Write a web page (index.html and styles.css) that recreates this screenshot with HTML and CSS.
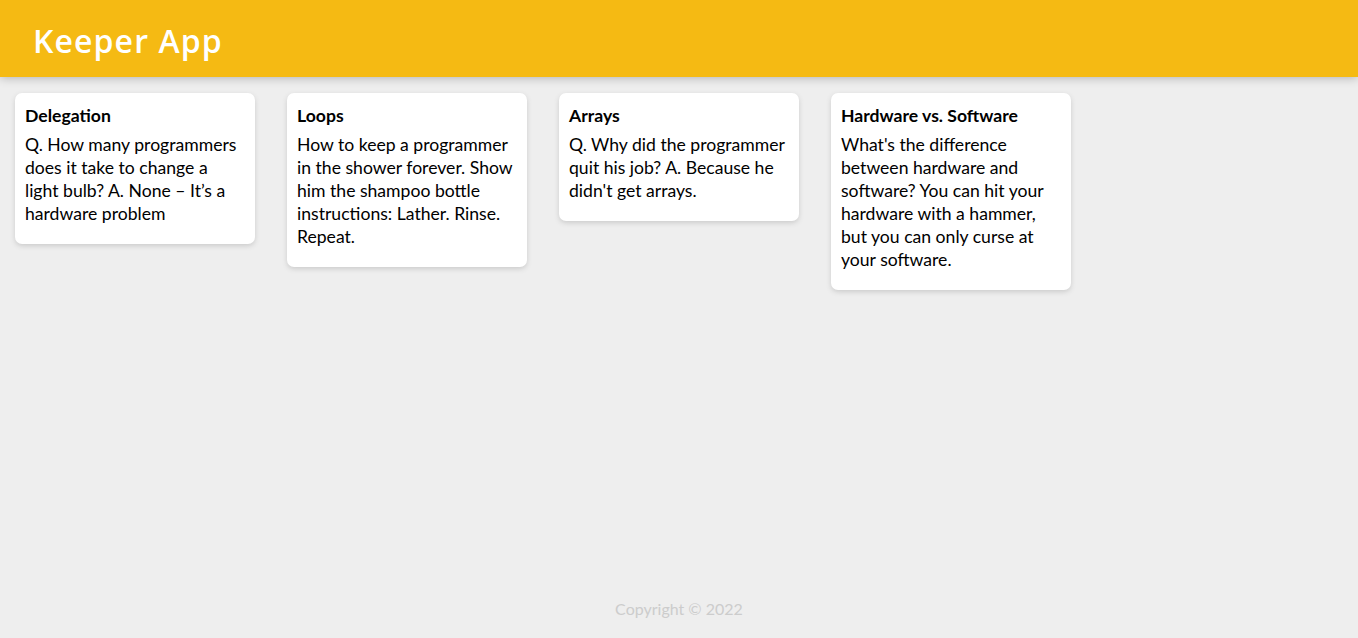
FILE: index.html
```html
<!DOCTYPE html>
<html lang="en">
<head>
<meta charset="utf-8">
<title>Keeper App</title>
<link rel="stylesheet" href="styles.css">
</head>
<body>
<div class="page">
  <header class="header">
    <h1 class="brand">Keeper App</h1>
  </header>
  <main class="notes">
    <div class="note">
      <h1 class="note-title">Delegation</h1>
      <p class="note-body">Q. How many programmers does it take to change a light bulb? A. None – It’s a hardware problem</p>
    </div>
    <div class="note">
      <h1 class="note-title">Loops</h1>
      <p class="note-body">How to keep a programmer in the shower forever. Show him the shampoo bottle instructions: Lather. Rinse. Repeat.</p>
    </div>
    <div class="note">
      <h1 class="note-title">Arrays</h1>
      <p class="note-body">Q. Why did the programmer quit his job? A. Because he didn't get arrays.</p>
    </div>
    <div class="note">
      <h1 class="note-title">Hardware vs. Software</h1>
      <p class="note-body">What's the difference between hardware and software? You can hit your hardware with a hammer, but you can only curse at your software.</p>
    </div>
  </main>
  <footer class="footer">
    <p class="copyright">Copyright © 2022</p>
  </footer>
</div>
</body>
</html>
```
FILE: styles.css
```css
html, body {
  margin: 0;
  padding: 0;
}
body {
  background: #eeeeee;
  font-family: "Lato", "Open Sans", sans-serif;
}
.page {
  min-height: 100vh;
  display: flex;
  flex-direction: column;
}
.header {
  background-color: #f5ba13;
  height: 77px;
  box-sizing: border-box;
  padding: 3px 33px 0;
  display: flex;
  align-items: center;
  box-shadow: 0 0 10px 0 rgba(0, 0, 0, 0.3);
  position: relative;
  z-index: 1;
}
.brand {
  margin: 0;
  color: #fff;
  font-family: "Open Sans", sans-serif;
  font-weight: 600;
  font-size: 32px;
  letter-spacing: 1.1px;
}
.notes {
  display: flex;
  flex-wrap: wrap;
  align-items: flex-start;
  gap: 32px;
  padding: 16px 15px;
}
.note {
  background: #fff;
  border-radius: 7px;
  box-shadow: 0 2px 5px #ccc;
  padding: 12px 10px 10px;
  width: 240px;
  box-sizing: border-box;
}
.note-title {
  margin: 0 0 6px;
  font-size: 17.6px;
  line-height: 22px;
  font-weight: 700;
  color: #000;
}
.note-body {
  margin: 0 0 9px;
  font-size: 17.6px;
  line-height: 23px;
  color: #000;
  white-space: pre-wrap;
  word-wrap: break-word;
}
.footer {
  margin-top: auto;
  text-align: center;
  height: 40px;
}
.copyright {
  margin: 0;
  padding-top: 1px;
  color: #ccc;
  font-size: 16px;
  line-height: 20px;
}
```
